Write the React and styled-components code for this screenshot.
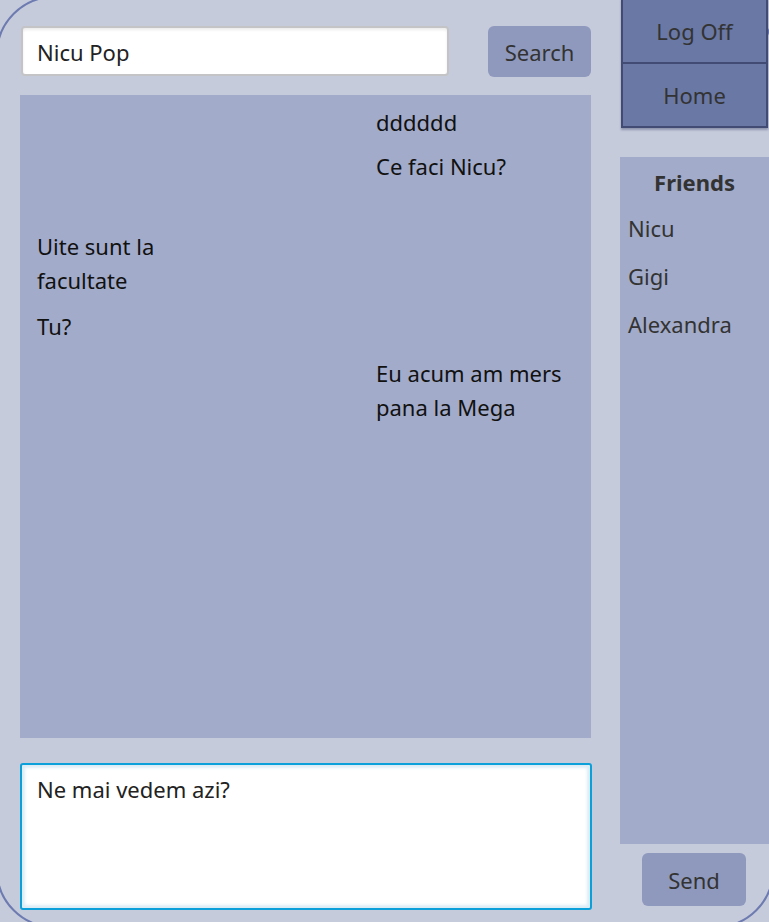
import React from "react";
import styled, { createGlobalStyle } from "styled-components";

const Global = createGlobalStyle`
  html, body {
    margin: 0;
    padding: 0;
    background: #c6cbdc;
    overflow: hidden;
    font-family: "Noto Sans", "Open Sans", sans-serif;
  }
  * { box-sizing: border-box; }
`;

const Frame = styled.div`
  margin: -4px 0 0 -4px;
  width: 778px;
  height: 932px;
  border: 2px solid #6d7bb0;
  border-radius: 58px;
  background: #c6cbdc;
  display: flex;
  padding: 0 3px 0 22px;
  gap: 28px;
`;

const LeftCol = styled.div`
  width: 572px;
  padding-top: 28px;
  display: flex;
  flex-direction: column;
`;

const SearchRow = styled.div`
  display: flex;
  align-items: flex-start;
  height: 51px;
  gap: 39px;
  padding-left: 1px;
`;

const SearchInput = styled.div`
  width: 428px;
  height: 50px;
  background: #fff;
  border: 2px solid #c4c4c6;
  border-radius: 4px;
  box-shadow: inset 0 2px 3px rgba(0, 0, 0, 0.08);
  font-size: 22px;
  color: #222;
  display: flex;
  align-items: center;
  padding: 2px 0 0 14px;
`;

const Button = styled.button`
  width: ${(p) => p.$w || 104}px;
  height: ${(p) => p.$h || 52}px;
  border: none;
  border-radius: 6px;
  background: #8f99bd;
  color: #333;
  font-family: inherit;
  font-size: 22px;
  padding: 0;
  display: flex;
  align-items: center;
  justify-content: center;
`;

const ChatPanel = styled.div`
  margin-top: 18px;
  width: 571px;
  height: 643px;
  background: #a2abc9;
  padding: 10px 0 0 0;
  display: flex;
  flex-direction: column;
`;

const Message = styled.div`
  align-self: flex-start;
  margin-left: ${(p) => (p.$mine ? 356 : 17)}px;
  margin-top: ${(p) => p.$gap}px;
  max-width: ${(p) => (p.$mine ? 205 : 160)}px;
  font-size: 22px;
  line-height: 34px;
  color: #111;
`;

const TextArea = styled.div`
  margin-top: 25px;
  height: 147px;
  background: #fff;
  border: 2px solid #0ba0d9;
  border-radius: 3px;
  box-shadow: inset 0 0 3px 3px #dcedf6;
  padding: 9px 15px;
  font-size: 22px;
  line-height: 30px;
  color: #222;
`;

const RightCol = styled.div`
  width: 149px;
  display: flex;
  flex-direction: column;
`;

const NavGroup = styled.div`
  width: 147px;
  margin-left: 1px;
  border: 2px solid #414b73;
  background: #6a78a6;
  box-shadow: 0 2px 2px rgba(40, 50, 90, 0.35);
  display: flex;
  flex-direction: column;
`;

const NavButton = styled.div`
  height: ${(p) => (p.$first ? 62 : 64)}px;
  border-top: ${(p) => (p.$first ? "none" : "2px solid #414b73")};
  display: flex;
  align-items: center;
  justify-content: center;
  font-size: 22px;
  color: #333;
`;

const FriendsPanel = styled.div`
  margin-top: 29px;
  height: 687px;
  background: #a2abc9;
  padding: 10px 0 0 8px;
  display: flex;
  flex-direction: column;
`;

const FriendsTitle = styled.div`
  font-weight: bold;
  font-size: 22px;
  line-height: 30px;
  color: #333;
  text-align: center;
  padding-right: 8px;
  margin-bottom: 16px;
`;

const Friend = styled.div`
  font-size: 22px;
  line-height: 30px;
  color: #333;
  margin-bottom: 18px;
`;

const SendWrap = styled.div`
  margin-top: 9px;
  padding-left: 22px;
`;

const messages = [
  { text: "dddddd", mine: true, gap: 0 },
  { text: "Ce faci Nicu?", mine: true, gap: 10 },
  { text: "Uite sunt la facultate", mine: false, gap: 46 },
  { text: "Tu?", mine: false, gap: 12 },
  { text: "Eu acum am mers pana la Mega", mine: true, gap: 13 },
];

const friends = ["Nicu", "Gigi", "Alexandra"];

export default function App() {
  return (
    <>
      <Global />
      <Frame>
        <LeftCol>
          <SearchRow>
            <SearchInput>Nicu Pop</SearchInput>
            <Button $w={103} $h={51}>Search</Button>
          </SearchRow>
          <ChatPanel>
            {messages.map((m, i) => (
              <Message key={i} $mine={m.mine} $gap={m.gap}>
                {m.text}
              </Message>
            ))}
          </ChatPanel>
          <TextArea>Ne mai vedem azi?</TextArea>
        </LeftCol>
        <RightCol>
          <NavGroup>
            <NavButton $first>Log Off</NavButton>
            <NavButton>Home</NavButton>
          </NavGroup>
          <FriendsPanel>
            <FriendsTitle>Friends</FriendsTitle>
            {friends.map((f) => (
              <Friend key={f}>{f}</Friend>
            ))}
          </FriendsPanel>
          <SendWrap>
            <Button $w={104} $h={53}>Send</Button>
          </SendWrap>
        </RightCol>
      </Frame>
    </>
  );
}
